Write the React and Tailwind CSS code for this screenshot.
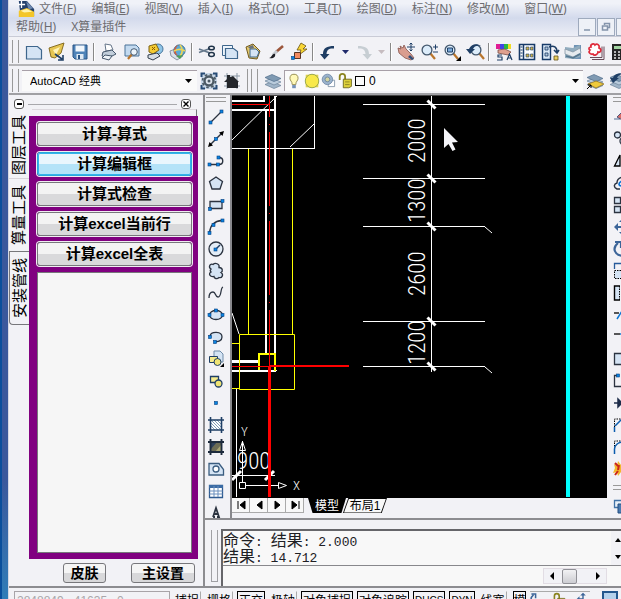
import React from "react";

const cjk = "font-['Noto_Sans','Noto_Sans_CJK_SC',sans-serif]";
const song = "font-['Liberation_Sans','Noto_Sans_CJK_SC',sans-serif]";
const surface = "bg-[#f2f2f6]";

/* ---------- icons, all on a 20 x 20 grid ---------- */
const navy = "#1f3f66";
const ink = "#2b3340";
const paper = "#d5e4f4";

const Node = ({ x, y }) => <rect x={x - 1.5} y={y - 1.5} width="3" height="3" fill="#0a84e0" stroke="#063f80" strokeWidth=".6" />;
const Glass = ({ x, y }) => (
  <>
    <path d={`M${x + 3} ${y + 3}l5 6`} stroke="#b9752c" strokeWidth="2.2" />
    <circle cx={x} cy={y} r="4.9" fill="#dcecfa" stroke="#44586e" strokeWidth="1.3" />
  </>
);
const Layers = () => (
  <>
    <path d="M2 13.500l7-3 9 4-7 3z" fill="#9fb4c8" stroke="#6c8299" strokeWidth=".7" />
    <path d="M2 10l7-3 9 4-7 3z" fill="#b9cbdc" stroke="#6c8299" strokeWidth=".7" />
    <path d="M2 6.500l7-3 9 4-7 3z" fill="#7f9ab3" stroke="#526f8c" strokeWidth=".7" />
  </>
);

const icons = {
  app: (
    <>
      <path d="M2 1h9l8 9v8H4z" fill="#23406b" />
      <path d="M10 1l8 8-5 2z" fill="#6b86ad" />
      <path d="M2 12l9-3 8 4v6H2z" fill="#f3c62a" />
      <path d="M4 12l7-2 6 3-9 1z" fill="#fff3ae" />
      <path d="M5 1v8M1 5h8" stroke="#fff" strokeWidth="1.4" />
    </>
  ),
  fresh: <path d="M2.500 4.500h11l4 3.500v9h-15z" fill={paper} stroke="#3e668c" strokeWidth="1.2" />,
  open: (
    <>
      <path d="M2 6l6-2 9-3-3 10-6 5-4-1z" fill="#e6c653" stroke="#7c6216" strokeWidth=".9" />
      <path d="M6 8l7-3-4 8z" fill="#fff4b8" />
      <path d="M8 12l7 5M16 13v5h-5" stroke={navy} strokeWidth="1.6" fill="none" />
    </>
  ),
  save: (
    <>
      <path d="M3 3h14v14H5l-2-2z" fill="#4f83b8" stroke="#275383" />
      <path d="M5.500 3.500h9v6h-9z" fill="#f2f7fc" />
      <path d="M6.500 12h7v5h-7z" fill="#dfe9f3" />
      <path d="M8 13h2v4H8z" fill="#275383" />
    </>
  ),
  print: (
    <>
      <path d="M6 2l6 1 2 5-7 1z" fill="#fff" stroke="#66768a" />
      <path d="M4 10l9-2 4 4-8 4-6-2z" fill="#c2cedb" stroke="#44566b" />
      <path d="M6 13l7 1-3 4-7-2z" fill="#eef3f8" stroke="#44566b" />
    </>
  ),
  preview: (
    <>
      <path d="M3 3h11l3 3v8H3z" fill="#c3daf0" stroke="#4a7398" />
      <path d="M10 12l-4 5" stroke="#b9752c" strokeWidth="2.200" />
      <circle cx="12" cy="10" r="3.300" fill="#edf5fc" stroke="#44586e" />
    </>
  ),
  publish: (
    <>
      <circle cx="13" cy="7" r="5" fill="#8fc4e6" stroke="#49769c" />
      <path d="M4 4l7-2 3 6-6 4-4-2z" fill="#f4cb32" stroke="#7c6216" />
      <path d="M3 13l9-2 3 3-7 4-5-2z" fill="#d6dde5" stroke="#333f4d" />
      <path d="M7 5l3 3M10 5L7 8" stroke="#8a5a00" />
    </>
  ),
  web: (
    <>
      <path d="M2 9l8-3 5 8-6 4-6-4z" fill="#d9dfe7" stroke="#8995a3" />
      <circle cx="11.500" cy="8.500" r="5.600" fill="#58a9d6" stroke="#3a6d92" />
      <path d="M10 3c-3 4-3 7 0 11l-3-2c-2-3-1-7 3-9z" fill="#d8593b" />
      <path d="M6 9c4-2 8-2 11 0M12 3c3 3 3 8 0 11" stroke="#ebd458" strokeWidth="1.700" fill="none" />
      <path d="M8 14l4 3 3-4z" fill="#4c9c57" />
    </>
  ),
  cut: (
    <>
      <path d="M2 7l11 4M2 10.500l11-4" stroke="#65788c" strokeWidth="1.600" />
      <ellipse cx="14.500" cy="12.500" rx="2.800" ry="2" fill="none" stroke="#1f3348" strokeWidth="1.500" />
      <ellipse cx="14.500" cy="6" rx="2.800" ry="1.800" fill="none" stroke="#1f3348" strokeWidth="1.500" />
    </>
  ),
  copy: (
    <>
      <path d="M2.500 3.500h10v10h-10z" fill="#edf4fb" stroke="#3e668c" />
      <path d="M5.500 6.500h8l4 3v7h-12z" fill={paper} stroke="#3e668c" strokeWidth="1.200" />
    </>
  ),
  paste: (
    <>
      <path d="M3 5l7-3 7 7-3 8-8-1z" fill="#e5c96c" stroke="#725a1e" />
      <path d="M7 7h6l3 3-2 5H7z" fill={paper} stroke="#3e668c" />
      <path d="M5 5l5-2 1 3-4 1z" fill="#68727e" />
    </>
  ),
  brush: (
    <>
      <path d="M17 4l-7 6" stroke="#9c563b" strokeWidth="2.600" />
      <path d="M11 9l-4 4" stroke="#c5c9cf" strokeWidth="3" />
      <path d="M3 16c3 0 3-5 6-4 1 3-2 5-6 4z" fill="#1c1c22" />
    </>
  ),
  match: (
    <>
      <path d="M12 1l5 3-3 3h4l-8 6 2-5H8z" fill="#f9d634" stroke="#6a5413" strokeWidth=".8" />
      <path d="M5.500 10.500h6v6h-6z" fill="#f28b62" stroke="#5a3423" />
      <Node x={4} y={16} />
    </>
  ),
  undo: <path d="M5 12c0-6 4-8 11-8v2.600c-5-.4-7 1-7.500 5.400h3L6.500 17.500 2 12z" fill="#1e3d63" />,
  redo: <path d="M15 12c0-6-4-8-11-8v2.600c5-.4 7 1 7.500 5.400h-3l5 5.500 4.500-5.500z" fill="#c7ced3" />,
  pan: (
    <>
      <path d="M2 6l3 1-1-3 3 2 1-3 2 4 5 5 3 4-3 2-6-2-6-5z" fill="#d99d8f" stroke="#84534b" strokeWidth=".8" />
      <path d="M14 13l4 4-2 1-4-3z" fill="#304d78" />
      <path d="M15 1v8M11 5h8M13.500 2.500L15 1l1.500 1.500M13.500 7.500L15 9l1.500-1.500" stroke={navy} fill="none" />
    </>
  ),
  zoomRealtime: (
    <>
      <Glass x={8} y={8} />
      <path d="M14 5h5M16.500 2.500v5M14 10h5" stroke={navy} />
    </>
  ),
  zoomWindow: (
    <>
      <Glass x={8} y={8} />
      <path d="M5.500 6h5v4h-5z" fill="#7cabda" stroke={navy} />
      <path d="M19 14v5h-5z" fill="#000" />
    </>
  ),
  zoomBack: (
    <>
      <Glass x={11} y={8} />
      <path d="M5 12l-4-5h3c2-5 8-6 12-3-4-1-7 0-8 3h2z" fill={navy} />
    </>
  ),
  props: (
    <>
      <path d="M2 2h4v5H2z" fill="#e01c95" /><path d="M6 2h4v5H6z" fill="#4242e4" />
      <path d="M10 2h4v5h-4z" fill="#28b743" /><path d="M14 2h3v5h-3z" fill="#f1dc24" />
      <path d="M4 8l7-1 6 3-3 3-5-1-5-1z" fill="#dfa08f" stroke="#794d45" strokeWidth=".8" />
      <path d="M13 18l2.500-6 2.500 6M14 16h3M8 13H4v2h4v3H3" stroke={navy} strokeWidth="1.200" fill="none" />
    </>
  ),
  design: (
    <>
      <path d="M2.500 2.500h15v15h-15z" fill="#fff" stroke="#173a68" strokeWidth="1.600" />
      <path d="M6.500 2.500v15" stroke="#173a68" strokeWidth="1.500" />
      <path d="M9 5h3v3H9zM13.500 5h2.500v3h-2.500zM9 12h3v3H9zM13.500 12h2.500v3h-2.500z" fill="#cfb24a" stroke="#173a68" strokeWidth=".6" />
      <path d="M3.500 5h2M3.500 8h2M3.500 11h2M3.500 14h2" stroke="#173a68" />
    </>
  ),
  palettes: (
    <>
      <path d="M2.500 2.500h8v15h-8z" fill="#dae8f6" stroke="#173a68" strokeWidth="1.400" />
      <path d="M5 5h3v3H5zM5 11h3v3H5z" fill="#b4c7db" stroke="#173a68" strokeWidth=".8" />
      <path d="M9 5c5-2 8 0 8 5M14 8l3 3 2-3" fill="none" stroke={navy} strokeWidth="1.600" />
      <path d="M14 14h4v4h-4z" fill="#e9cf60" stroke="#665215" strokeWidth=".8" />
    </>
  ),
  sheets: (
    <>
      <path d="M11 3h7v14h-8z" fill="#6f93b4" />
      <path d="M2 5l8 1 7-3v12l-7 2-8-1z" fill="#91acbe" />
      <path d="M2 7l8 3 7-4 1 5-8 4-8-3z" fill="#e5eaee" stroke="#8395a5" strokeWidth=".8" />
      <path d="M3 14l7 2 7-4" stroke="#547790" strokeWidth="1.500" fill="none" />
    </>
  ),
  markup: (
    <>
      <path d="M6 17.500h12v-13M4 15.500h12v-11" fill="none" stroke="#6b4d5a" />
      <path d="M5 5c-1-3 3-4 4-2 2-2 5 0 4 3 3 1 2 5-1 4 0 3-4 4-5 2-3 1-5-2-3-4-2-1-1-3 1-3z" fill="#fff" stroke="#df2a3a" strokeWidth="1.700" />
    </>
  ),
  calc: (
    <>
      <path d="M3 2h14v16H3z" fill="#252525" />
      <path d="M5 4h10v3H5z" fill="#a2d4a2" />
      <path d="M5 10h2M9 10h2M13 10h2M5 13h2M9 13h2M13 13h2M5 16h2M9 16h2" stroke="#e8e8e8" strokeWidth="1.500" />
    </>
  ),
  gear: (
    <>
      <path d="M2 2h16v16H2z" fill="#c9d8e8" />
      <path d="M2.500 6V2.500H6M14 2.500h3.500V6M17.500 14v3.500H14M6 17.500H2.500V14" stroke="#274b75" strokeWidth="2" fill="none" />
      <circle cx="10" cy="10" r="4.500" fill="#dfe6ee" stroke="#4b5964" strokeWidth="2.400" />
      <circle cx="10" cy="10" r="6.500" fill="none" stroke="#4b5964" strokeWidth="1.700" strokeDasharray="2.550 2.550" />
      <circle cx="10" cy="10" r="1.500" fill="#4b5964" />
    </>
  ),
  home: (
    <>
      <path d="M2 5h16M2 15h16M5 2v16M15 2v16" fill="none" stroke="#8997a5" />
      <path d="M2 11l5-5h2l2-1 6 6h-1v6H5v-6z" fill="#23262b" />
      <path d="M5 4h3v5H5z" fill="#23262b" />
    </>
  ),
  layers: <Layers />,
  layerPrev: (
    <>
      <Layers />
      <path d="M3 13l8-3 8 3-8 4z" fill="#efca3c" stroke="#86691b" strokeWidth=".7" />
      <path d="M2 18l4-4M3 14h3v3" stroke="#000" fill="none" />
    </>
  ),
  layerUndo: (
    <>
      <Layers />
      <path d="M5 12L2 7h3c1-4 7-6 12-4-4 0-7 1-8 4h2z" fill={navy} />
    </>
  ),
  bulb: (
    <>
      <path d="M5.500 7a4.500 4.500 0 119 0c0 3-2.500 3-2.500 7H8c0-4-2.500-4-2.500-7z" fill="#fff9b8" stroke="#8e8648" />
      <path d="M8 14.500h4V18H8z" fill="#7390b8" />
    </>
  ),
  sun: (
    <>
      <path d="M3 3h14v14H3z" fill="#e4d24a" />
      <circle cx="10" cy="10" r="7.500" fill="#f8e94a" stroke="#8fa24c" />
    </>
  ),
  freeze: (
    <>
      <path d="M9 9h8v8H9z" fill="#fff" stroke="#768ca0" />
      <circle cx="8" cy="8" r="6.500" fill="#9bb3cc" stroke="#6782a1" />
      <circle cx="8" cy="8" r="3" fill="#d3d4a2" stroke="#66809a" />
    </>
  ),
  lock: (
    <>
      <path d="M3 9V5c0-4 6-4 6 0v4" fill="none" stroke="#8b8420" strokeWidth="2" />
      <path d="M7 8h9v8l-3 1.500H7z" fill="#ddd03a" stroke="#6b651b" />
      <path d="M9 11h5M9 14h5" stroke="#8a831e" />
    </>
  ),
  line: (<><path d="M4 16L15 5" stroke={ink} strokeWidth="1.300" /><Node x={4.500} y={15.500} /><Node x={15.500} y={4.500} /></>),
  xline: (
    <>
      <path d="M4 16L16 4" stroke={ink} strokeWidth="1.500" />
      <path d="M2 18l1.500-5 3.500 3.500zM18 2l-1.500 5L13 3.500z" fill="#000" /><Node x={10} y={10} />
    </>
  ),
  pline: (<><path d="M3 13.500h10c5 0 5-7 0-7" fill="none" stroke={ink} strokeWidth="1.400" /><Node x={3.500} y={13.500} /><Node x={12} y={13.500} /><Node x={12.500} y={6.500} /></>),
  polygon: <path d="M10 4l6.500 4.500-2.500 7.500H6L3.500 8.500z" fill={paper} stroke={ink} strokeWidth="1.300" />,
  rect: (<><path d="M4 6.500h12v7H4z" fill={paper} stroke={ink} strokeWidth="1.300" /><Node x={4} y={14} /><Node x={16.500} y={6} /></>),
  arc: (<><path d="M3.500 16C4 9 8 4 16 3.500" fill="none" stroke={ink} strokeWidth="1.300" /><Node x={3.500} y={16} /><Node x={7.500} y={8} /><Node x={16.500} y={3.500} /></>),
  circle: (<><circle cx="10" cy="10" r="7" fill="#e3edf7" stroke={ink} strokeWidth="1.300" /><path d="M10 10l4-4" stroke={navy} strokeWidth="1.400" /><Node x={9.500} y={10.500} /></>),
  cloud: <path d="M5 8C2 6 4 2 7 3.500c2-2 7-1 6 3 4 0 4 4 2 5 3 2 1 6-2 5-2 2-5 1-5-1-4 1-6-3-3-4.500-1-1-1-2 0-3z" fill={paper} stroke={ink} strokeWidth="1.300" />,
  spline: <path d="M3 15c0-4 2-6 4-6 3 0 2 5 5 5 4 0 2-9 5-10" fill="none" stroke={ink} strokeWidth="1.300" />,
  ellipse: (<><ellipse cx="10" cy="10" rx="6.500" ry="4.500" fill={paper} stroke={ink} strokeWidth="1.300" /><Node x={3.500} y={10} /><Node x={16.500} y={10} /><Node x={10} y={5.500} /></>),
  earc: (<><path d="M4 9c1-5 12-5 12 1 0 4-4 5-7 4.500" fill={paper} stroke={ink} strokeWidth="1.300" /><Node x={4} y={10} /><Node x={9} y={15} /></>),
  insert: (
    <>
      <path d="M8 2h6l3 3v8H8z" fill={paper} stroke="#6f8ba8" />
      <path d="M3.500 7.500h8v6h-8z" fill="#f5eb8d" stroke={navy} /><circle cx="11.500" cy="13" r="3.500" fill="#efe473" stroke={navy} />
      <path d="M18 14v4h-4z" fill="#000" />
    </>
  ),
  block: (<><path d="M4.500 5.500h8v6h-8z" fill="#f5eb8d" stroke={navy} strokeWidth="1.300" /><circle cx="12.500" cy="12.500" r="3.500" fill="#efe473" stroke={navy} strokeWidth="1.300" /></>),
  point: <Node x={10} y={10} />,
  hatch: (<><path d="M5 5h10v10H5z" fill="#fff" /><path d="M5 8l7 7M5 11l4 4M8 5l7 7M11 5l4 4M5 5l10 10" stroke="#5e84a6" strokeWidth=".8" /><path d="M4.500 2v16M15.500 2v16M2 5h16M2 15h16" stroke={navy} strokeWidth="1.600" /></>),
  gradient: (<><path d="M5 5h10v10H5z" fill="#6c6c55" /><path d="M5 5h6L5 12z" fill="#2d405b" /><path d="M15 8v7H9z" fill="#aba774" /><path d="M4.500 2v16M15.500 2v16M2 5h16M2 15h16" stroke="#1d2b3d" strokeWidth="1.900" /></>),
  region: (<><path d="M3 4.500h10l4.500 6V16H3z" fill={paper} stroke="#3b5d80" strokeWidth="1.300" /><circle cx="10" cy="10" r="3" fill="#fff" stroke="#3b5d80" strokeWidth="1.300" /></>),
  table: (<><path d="M3.500 4.500h13v12h-13z" fill="#fff" stroke="#2f5b91" strokeWidth="1.300" /><path d="M3 4h14v3H3z" fill="#3b6ba4" /><path d="M3.500 10h13M3.500 13h13M8 5v11M12 5v11" stroke="#6a8fbd" /></>),
  mtext: <path d="M7 14L10 5l3 9h-2M7 14h2M8 11h4" fill="none" stroke={ink} strokeWidth="1.800" />,
  erase: (<><path d="M1 12h6" stroke="#536d96" /><path d="M4 10l5-5 7 3-5 6z" fill="#d96d68" stroke="#51577a" /></>),
  copyObj: (<><circle cx="4.500" cy="6" r="3" fill={paper} stroke={ink} strokeWidth="1.300" /><circle cx="11" cy="12" r="4" fill={paper} stroke={ink} strokeWidth="1.300" /></>),
  mirror: <path d="M1.500 15H7V4z" fill={paper} stroke="#000" strokeWidth="1.300" />,
  offset: (<><path d="M7 16H4c-4-2-3-5 0-6 0-4 3-6 8-6" fill="none" stroke={ink} strokeWidth="1.400" /><path d="M9 13c-4 0-4-3 0-5" fill="none" stroke="#0c73d4" strokeWidth="1.700" /></>),
  array: <path d="M1.500 2.500h6v6h-6zM1.500 11.500h6v6h-6zM11.500 2.500h6v6h-6zM11.500 11.500h6v6h-6z" fill={paper} stroke={ink} strokeWidth="1.300" />,
  move: <path d="M1 10l4-4v3h4V5H6l4-4 4 4h-3v10h3l-4 4-4-4h3v-4H5v3z" fill="#3c6599" />,
  rotate: <path d="M5 4c-6 5-4 12 5 13M2 3h6v6" fill="none" stroke="#3c6599" strokeWidth="2.200" />,
  scale: (<><path d="M1.500 8V2.500H16" fill="none" stroke="#265a9a" strokeWidth="1.300" /><path d="M1.500 9.500h12v8h-12z" fill={paper} stroke="#000" strokeDasharray="1.500 1" /></>),
  stretch: (<><path d="M7 3H1.500v14H7" fill={paper} stroke="#000" strokeWidth="1.400" /><path d="M6.500 3v14" stroke="#000" strokeDasharray="1.500 1" /></>),
  trim: (<><path d="M1 8h5" stroke="#000" strokeWidth="1.300" /><path d="M4 14l5-8" stroke="#0b75d5" strokeWidth="1.500" /></>),
  extend: (<><path d="M1 7h6" stroke="#000" strokeWidth="1.300" /><path d="M7 7h5" stroke="#0b75d5" strokeWidth="1.500" /></>),
  breakAt: <path d="M12 4.500H1.500v11H12z" fill={paper} stroke={ink} strokeWidth="1.300" />,
  breakObj: (<><path d="M5 4.500H1.500v11H12" fill="none" stroke={ink} strokeWidth="1.300" /><Node x={5} y={4.500} /></>),
  join: <path d="M1 10h7M5 6l4 4-4 4z" fill="#1e2c4a" stroke="#1e2c4a" strokeWidth="1.500" />,
  chamfer: (<><path d="M1.500 17V4H12" fill="none" stroke="#000" strokeDasharray="1.500 1" /><path d="M1.500 17v-5M2 11l7-7" stroke="#0b5cae" strokeWidth="1.500" /></>),
  fillet: (<><path d="M1.500 17V4H12" fill="none" stroke="#000" strokeDasharray="1.500 1" /><path d="M1.500 17v-5c0-4 4-7 9-7" fill="none" stroke="#0b5cae" strokeWidth="1.500" /></>),
  explode: (<><path d="M1 5l3 2 1-5 3 4 4-2-2 5 2 5-4-1-3 4-1-4-4 1 2-5z" fill="#f4b62b" /><path d="M2 4l3 3M5 12l-3 4M6 6l-1 5" stroke="#c92419" strokeWidth="2" /></>),
  order: (<><path d="M1.500 4.500h9v7h-9z" fill="#e8f0f8" stroke="#4273a7" strokeWidth="1.300" /><path d="M5 8h9v9H5z" fill="#4a7ab0" stroke="#204d80" /></>),
};

const Icon = ({ name, className = "size-5" }) => (
  <svg viewBox="0 0 20 20" fill="none" aria-hidden="true" className={`shrink-0 ${className}`}>{icons[name]}</svg>
);
const ToolButton = ({ name, label, className = "h-[22px] w-[23px]" }) => (
  <button type="button" aria-label={label} className={`flex shrink-0 items-center justify-center ${className}`}>
    <Icon name={name} />
  </button>
);
const Grip = () => <span className="mx-[3px] h-full w-[7px] shrink-0 border-x border-[#999]" />;
const Separator = () => <span className="mx-[2px] h-[18px] w-[2px] shrink-0 border-l border-[#888] bg-white" />;
const Caret = ({ color = "fill-black" }) => (
  <svg viewBox="0 0 7 4" className={`h-1 w-[7px] ${color}`} aria-hidden="true"><path d="M0 0h7L3.500 4z" /></svg>
);

/* ---------- menu bar ---------- */
const menus = [["文件", "F"], ["编辑", "E"], ["视图", "V"], ["插入", "I"], ["格式", "O"], ["工具", "T"], ["绘图", "D"], ["标注", "N"], ["修改", "M"], ["窗口", "W"], ["帮助", "H"], ["X算量插件", ""]];

const MenuBar = () => (
  <header className="flex h-[37px] shrink-0 overflow-hidden border-b border-[#c9cbd6] bg-linear-to-b from-[#f0f2f8] from-10% via-[#d3daec] via-50% to-[#eceef6]">
    <nav className={`flex min-w-0 flex-1 flex-wrap content-start gap-x-[15px] pl-[7px] text-[12px] leading-[18px] text-[#6c6c70] ${cjk}`}>
      <span className="-mr-[11px] flex h-[18px] w-[19px] justify-center"><Icon name="app" className="h-[18px] w-[18px]" /></span>
      {menus.map(([name, key]) => (
        <button type="button" key={name} className="h-[18px] whitespace-nowrap">
          {name}{key && <>(<u>{key}</u>)</>}
        </button>
      ))}
    </nav>
    <div className="flex w-[43px] shrink-0 gap-px self-end overflow-hidden">
      {["最小化", "还原", "关闭"].map((label, i) => (
        <button type="button" key={label} aria-label={label} className="flex h-[18px] w-[18px] shrink-0 items-center justify-center border border-[#9eaabd] bg-[#eef1f7]">
          <svg viewBox="0 0 10 10" className="size-[10px]" fill="none" stroke="#8494ab" strokeWidth="1.500">
            {i === 0 && <path d="M2 8h6" />}
            {i === 1 && <path d="M3.500 3V1.500h5v4H7M1.500 4h5v4h-5z" />}
            {i === 2 && <path d="M2 2l6 6M8 2L2 8" />}
          </svg>
        </button>
      ))}
    </div>
  </header>
);

/* ---------- top tool bars ---------- */
const standardGroups = [
  [["fresh", "新建"], ["open", "打开"], ["save", "保存"]],
  [["print", "打印"], ["preview", "打印预览"], ["publish", "发布"], ["web", "三维DWF"]],
  [["cut", "剪切"], ["copy", "复制"], ["paste", "粘贴"], ["brush", "特性匹配"], ["match", "块编辑器"]],
  [["undo", "放弃", "fill-[#1f2a6b]"], ["redo", "重做", "fill-[#c6bcc0]"]],
  [["pan", "平移"], ["zoomRealtime", "实时缩放"], ["zoomWindow", "窗口缩放"], ["zoomBack", "缩放上一个"]],
  [["props", "特性"], ["design", "设计中心"], ["palettes", "工具选项板"], ["sheets", "图纸集"], ["markup", "标记集"], ["calc", "计算器"]],
];

const StandardBar = () => (
  <div className="flex h-[29px] shrink-0 items-center overflow-hidden border-b-2 border-[#b5b5b8] pt-[3px] pb-px">
    <Grip />
    {standardGroups.map((group, g) => (
      <React.Fragment key={g}>
        {g > 0 && <Separator />}
        {group.map(([name, label, drop]) => (
          <React.Fragment key={name}>
            <ToolButton name={name} label={label} />
            {drop && <button type="button" aria-label={`${label}列表`} className="flex h-[22px] w-[13px] shrink-0 items-center justify-center"><Caret color={drop} /></button>}
          </React.Fragment>
        ))}
      </React.Fragment>
    ))}
  </div>
);

const LayerBar = () => (
  <div className="flex h-[29px] shrink-0 items-center overflow-hidden border-b-2 border-[#a0a0a4] pt-[3px] pb-px">
    <Grip />
    <div className="relative flex h-[21px] w-[175px] shrink-0 items-center border-t border-[#a8a0a8] bg-[#fafafa]">
      <select aria-label="工作空间" className={`w-full appearance-none bg-transparent pl-2 text-[11px] leading-5 text-black ${song}`}>
        <option>AutoCAD 经典</option>
      </select>
      <span className="pointer-events-none absolute right-[5px]"><Caret /></span>
    </div>
    <ToolButton name="gear" label="工作空间设置" />
    <ToolButton name="home" label="我的工作空间" />
    <span className="ml-1 h-full w-px shrink-0 bg-[#999]" />
    <Grip />
    <ToolButton name="layers" label="图层特性管理器" />
    <div className="relative flex h-[21px] min-w-0 flex-1 items-center border-t border-l border-[#a8a0a8] bg-[#fafafa]">
      <Icon name="bulb" className="size-[18px]" />
      <Icon name="sun" className="size-[18px]" />
      <Icon name="freeze" className="size-4" />
      <Icon name="lock" className="size-[18px]" />
      <span className="size-[10px] shrink-0 border border-black" />
      <select aria-label="图层" className={`w-full min-w-0 appearance-none bg-transparent pl-1 text-[12px] leading-5 text-black ${song}`}>
        <option>0</option>
      </select>
      <span className="pointer-events-none absolute right-1"><Caret /></span>
    </div>
    <div className="flex w-[38px] shrink-0 overflow-hidden">
      <ToolButton name="layerPrev" label="置为当前图层" />
      <ToolButton name="layerUndo" label="上一个图层" />
    </div>
  </div>
);

/* ---------- left palette ---------- */
const actions = ["计算-算式", "计算编辑框", "计算式检查", "计算excel当前行", "计算excel全表"];
const tabs = ["图层工具", "算量工具", "安装管线"];

const Palette = () => (
  <aside className="flex w-[196px] shrink-0 flex-col border-r-2 border-[#8c8c90] pt-1">
    <div className="flex h-[10px] shrink-0 items-center gap-1 pr-[12px] pl-[5px]">
      <button type="button" aria-label="折叠" className="flex size-[10px] items-center justify-center rounded-[3px] border border-[#555] bg-white"><span className="h-[2px] w-[5px] bg-black" /></button>
      <span className="h-px flex-1 bg-[#a8a8ac]" />
      <button type="button" aria-label="关闭" className="flex size-[10px] items-center justify-center rounded-[3px] border border-[#555] bg-white">
        <svg viewBox="0 0 6 6" className="size-[6px]" stroke="#000" strokeWidth="1.400"><path d="M.5.500l5 5M5.500.500l-5 5" /></svg>
      </button>
    </div>
    <div className="flex min-h-0 flex-1">
      <div role="tablist" className="flex w-5 shrink-0 flex-col pt-1">
        {tabs.map((name, i) => (
          <button
            type="button"
            role="tab"
            key={name}
            aria-selected={i === 1}
            className={`flex w-5 items-center justify-center border-b text-[15px] leading-5 text-black [writing-mode:vertical-rl] [text-orientation:sideways] ${song} ${i === 0 ? "h-[66px] border-[#d8d4da]" : "h-[73px] border-[#77777b]"} ${i === 2 ? "rounded-bl-[4px] border-l" : ""}`}
          >
            <span className="rotate-180">{name}</span>
          </button>
        ))}
      </div>
      <div className="flex min-w-0 flex-1 flex-col pr-[5px]">
        <div className="mr-px ml-[3px] h-[7px] shrink-0 border-t border-r border-t-[#dcd8de] border-r-[#77777b]" />
        <div className="flex min-h-0 flex-1 flex-col gap-[6px] bg-[#800080] px-2 py-[6px] pr-[6px]">
          {actions.map((name, i) => (
            <button
              type="button"
              key={name}
              className={`h-6 shrink-0 rounded-[3px] border text-[15px] leading-[22px] font-bold text-black ring-1 ring-[#f0eef2] ${song} ${i === 1 ? "border-[#2ba6dc] bg-linear-to-b from-[#e9f6fd] from-50% to-[#b4e3f8] to-50% outline-1 -outline-offset-2 outline-[#35b5ea]" : "border-[#77777b] bg-linear-to-b from-[#f3f3f3] from-50% to-[#d9d9db] to-50%"}`}
            >
              {name}
            </button>
          ))}
          <div className="min-h-0 flex-1 border border-[#77777b] bg-[#f6f6f6]" />
        </div>
        <div className="flex h-[27px] shrink-0 items-center justify-end gap-[25px] pr-[3px]">
          {["皮肤", "主设置"].map((name) => (
            <button type="button" key={name} className={`h-5 rounded-[3px] border border-[#77777b] bg-linear-to-b from-[#f5f5f5] from-50% to-[#d8d8da] to-50% text-[14px] leading-[18px] font-bold text-black ${song} ${name === "皮肤" ? "w-[43px]" : "w-[64px]"}`}>{name}</button>
          ))}
        </div>
      </div>
    </div>
  </aside>
);

/* ---------- side tool bars ---------- */
const drawTools = [["line", "直线"], ["xline", "构造线"], ["pline", "多段线"], ["polygon", "正多边形"], ["rect", "矩形"], ["arc", "圆弧"], ["circle", "圆"], ["cloud", "修订云线"], ["spline", "样条曲线"], ["ellipse", "椭圆"], ["earc", "椭圆弧"], ["insert", "插入块"], ["block", "创建块"], ["point", "点"], ["hatch", "图案填充"], ["gradient", "渐变色"], ["region", "面域"], ["table", "表格"], ["mtext", "多行文字"]];
const modifyTools = [["erase", "删除"], ["copyObj", "复制对象"], ["mirror", "镜像"], ["offset", "偏移"], ["array", "阵列"], ["move", "移动"], ["rotate", "旋转"], ["scale", "缩放"], ["stretch", "拉伸"], ["trim", "修剪"], ["extend", "延伸"], ["breakAt", "打断于点"], ["breakObj", "打断"], ["join", "合并"], ["chamfer", "倒角"], ["fillet", "圆角"], ["explode", "分解"]];

const SideBar = ({ tools, className, children }) => (
  <div className={`flex shrink-0 flex-col overflow-hidden pt-[2px] ${className}`}>
    <span className="mb-1 h-[5px] w-5 shrink-0 border-y border-[#999]" />
    {tools.map(([name, label]) => <ToolButton key={name} name={name} label={label} className="h-[22px] w-5" />)}
    {children}
  </div>
);

/* ---------- drawing area ---------- */
const thin = "font-['Roboto_Condensed','Liberation_Sans_Narrow','Roboto',sans-serif] font-light";
const levels = [104.5, 178.5, 226.5, 321.5, 366.5];
const dims = [["2000", 163], ["1300", 223], ["2600", 296], ["1200", 365]];

const Drawing = () => (
  <svg width="375" height="401" viewBox="232 96 375 401" fill="none" role="img" aria-label="模型空间图形" className="shrink-0">
    <g stroke="#fff">
      <path d="M232 148.500h83M314.500 96v53M236.500 389v108M431.500 96v276" />
      <path d="M232 140l45-44M290 147l24-23M232 313l7 21M485 227l7 6M485 367l7 6" />
      <path strokeWidth="2" d="M232 101h33M264 96v6M232 110h42M266 111v243M275 96v258M232 371h44M276 371v-1" />
      <path strokeWidth="3" d="M232 361.500h27" />
      {levels.map((y) => (
        <React.Fragment key={y}>
          <path d={`M363 ${y}h122`} />
          <path strokeWidth="3" d={`M427.500 ${y - 4}l8 8`} />
        </React.Fragment>
      ))}
      <path d="M232 475.500h43" />
      <path strokeWidth="3" d="M232 480l9-9M265 480l9-9" />
      <path d="M242.500 441v41M239.500 450.500h6l-3-9zM239.500 482.500h6v6h-6zM246 485.500h32M278.500 482.500v6l8-3z" />
    </g>
    <path stroke="#ff0" d="M248.500 149v185M292.500 149v185M239.500 334.500h55v55h-55zM232 343.500h7M232 388.500h7" />
    <path stroke="#ff0" strokeWidth="2" d="M259 370v-16h16v17" />
    <path stroke="#f00" d="M232 104.500h38M232 366.500h38M269.500 96v21M269.500 124v1M269.500 132v74M269.500 213v1M269.500 221v74M269.500 302v1M269.500 310v56" />
    <g fill="#fff" className={`text-[23px] ${thin}`}>
      {dims.map(([value, y]) => <text key={value} transform={`translate(425 ${y}) rotate(-90)`}>{value}</text>)}
      <text x="237" y="469">900</text>
    </g>
    <g fill="#fff" className={`text-[13px] ${thin}`}>
      <text x="241" y="436">Y</text>
      <text x="293" y="490">X</text>
    </g>
    <path stroke="#f00" strokeWidth="2" d="M270 366h79" />
    <path stroke="#f00" strokeWidth="3" d="M269.500 366v131" />
    <path stroke="#0ff" strokeWidth="4" d="M568 96v401" />
    <path fill="#f4f4f8" d="M444 128v20l4.500-4 4 7 3-1.500-3.500-7 6-.5z" />
  </svg>
);

const SheetTabs = () => (
  <div className="flex h-[15px] shrink-0 overflow-hidden">
    {["M3 2v8M10 2L5 6l5 4z", "M9 2L4 6l5 4z", "M4 2l5 4-5 4z", "M10 2v8M3 2l5 4-5 4z"].map((d) => (
      <button type="button" key={d} aria-label="切换布局" className="flex w-[18px] items-center justify-center border-r border-b border-[#aaa] bg-[#f8f8f8]">
        <svg viewBox="0 0 12 12" className="size-3" fill="#000" stroke="#000"><path d={d} /></svg>
      </button>
    ))}
    <button type="button" className={`ml-1 h-[15px] w-[38px] bg-black text-[12px] leading-[14px] text-white [clip-path:polygon(0_0,100%_0,88%_100%,12%_100%)] ${song}`}>模型</button>
    <button type="button" className={`-ml-[3px] h-[15px] w-[44px] bg-black text-[12px] [clip-path:polygon(12%_0,100%_0,88%_100%,0_100%)] ${song}`}>
      <span className="mx-px block h-[14px] bg-[#f8f8f8] leading-[14px] text-black [clip-path:polygon(12%_0,100%_0,88%_100%,0_100%)]">布局1</span>
    </button>
  </div>
);

/* ---------- command line ---------- */
const Zh = ({ children }) => <span className="font-['Noto_Sans_CJK_SC',sans-serif] text-[16px] leading-4">{children}</span>;

const CommandLine = () => (
  <section className="flex h-[68px] shrink-0 border-t-2 border-[#8c8c90] pt-[9px]">
    <span className="mt-px mr-[3px] mb-1 ml-[6px] w-[7px] shrink-0 border-x border-b border-[#a0a0a4]" />
    <div className="flex min-w-0 flex-1 flex-col border-t-2 border-l-2 border-[#66666a] bg-[#f8f8f8]">
      <div className="flex min-h-0 flex-1">
        <div className="min-w-0 flex-1 font-['Liberation_Mono',monospace] text-[13px] text-[#202024]">
          <p className="h-4 leading-4 whitespace-pre"><Zh>命令</Zh>: <Zh>结果</Zh>: 2.000</p>
          <p className="h-4 leading-4 whitespace-pre"><Zh>结果</Zh>: 14.712</p>
        </div>
        <div className={`flex w-[10px] flex-col items-end justify-around ${surface}`}>
          <svg viewBox="0 0 6 4" className="h-1 w-[6px]"><path d="M0 4h6L3 0z" /></svg>
          <svg viewBox="0 0 6 4" className="h-1 w-[6px]"><path d="M0 0h6L3 4z" /></svg>
        </div>
      </div>
      <div className="flex h-[21px] shrink-0 items-center border-t border-[#88888c] pr-[14px]">
        <input type="text" aria-label="命令" className="h-4 min-w-0 flex-1 bg-transparent outline-none" />
        <div className={`flex h-4 w-[64px] items-center border border-[#e2dde4] px-[6px] ${surface}`}>
          <svg viewBox="0 0 4 8" className="h-2 w-1"><path d="M4 0v8L0 4z" /></svg>
          <span className="ml-2 h-[15px] w-[15px] rounded-[2px] border border-[#909096] bg-linear-to-b from-[#f2f2f4] to-[#cdcdd2]" />
          <svg viewBox="0 0 4 8" className="ml-auto h-2 w-1"><path d="M0 0v8l4-4z" /></svg>
        </div>
      </div>
    </div>
  </section>
);

/* ---------- status bar ---------- */
const modes = [["捕捉", 0], ["栅格", 0], ["正交", 1], ["极轴", 0], ["对象捕捉", 1], ["对象追踪", 1], ["DUCS", 1], ["DYN", 1], ["线宽", 0]];

const StatusBar = () => (
  <footer className={`flex h-[13px] shrink-0 items-start overflow-hidden border-t-2 border-[#8c8c90] pt-[3px] pl-[5px] text-[12px] leading-[18px] text-black ${song}`}>
    <div className="h-5 w-[156px] shrink-0 border border-[#a8a4a8] pl-[2px] whitespace-pre text-[#aaa6aa]">2848849,  41635 , 0</div>
    <div className="flex gap-1 pl-[3px]">
      {modes.map(([name, on]) => (
        <button type="button" key={name} aria-pressed={!!on} className={`flex h-5 shrink-0 items-start border px-px whitespace-nowrap ${name.startsWith("D") ? "text-[10px]" : ""} ${on ? "border-black" : "border-transparent border-r-[#aaa]"}`}>{name}</button>
      ))}
    </div>
    <button type="button" className="ml-[6px] h-5 w-[13px] shrink-0 overflow-hidden border border-black">模型</button>
    <span className="ml-1 flex gap-2 border-t border-[#aaa]">
      <Icon name="rotate" className="size-[14px]" />
      <Icon name="lock" className="size-[16px]" />
      <Icon name="move" className="size-[14px]" />
    </span>
    <button type="button" aria-label="全屏显示" className="mr-[3px] ml-auto h-4 w-4 shrink-0 border-2 border-[#24588e] bg-[#b5d2ec]" />
  </footer>
);

export default function App() {
  return (
    <div className="flex h-screen overflow-hidden">
      <div className="w-[9px] shrink-0 border-r border-l-2 border-r-[#d4d8e4] border-l-[#0a4f9c] bg-linear-to-b from-[#3a589c] from-80% to-[#2f7db8]" />
      <div className={`flex min-w-0 flex-1 flex-col ${surface}`}>
        <MenuBar />
        <StandardBar />
        <LayerBar />
        <div className="flex min-h-0 flex-1">
          <Palette />
          <div className="flex min-w-0 flex-1 flex-col">
            <main className="flex min-h-0 flex-1">
              <SideBar tools={drawTools} className="w-[25px] pl-px" />
              <div className="flex min-w-0 flex-1 flex-col border-l-2 border-[#88888c]">
                <div className="flex min-h-0 flex-1 overflow-hidden border-t border-[#444] bg-black"><Drawing /></div>
                <SheetTabs />
                <div className="h-[5px] shrink-0" />
              </div>
              <SideBar tools={modifyTools} className="w-[14px] pl-[6px]">
                <span className="my-[5px] h-[5px] w-5 shrink-0 border-y border-[#999]" />
                <ToolButton name="order" label="绘图次序" className="h-[22px] w-5" />
              </SideBar>
            </main>
            <CommandLine />
          </div>
        </div>
        <StatusBar />
      </div>
    </div>
  );
}
